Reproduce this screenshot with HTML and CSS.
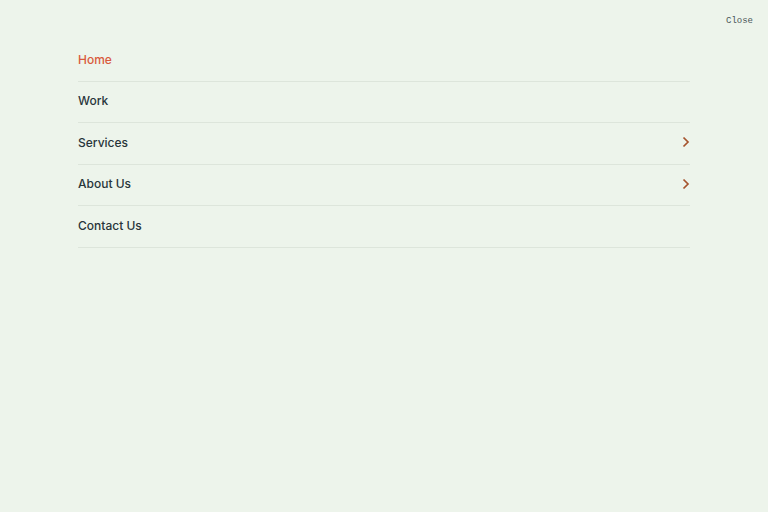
FILE: index.html
```html
<!DOCTYPE html>
<html>
<head>
<meta charset="utf-8">
<link rel="stylesheet" href="styles.css">
</head>
<body>
<div class="page">
  <header class="topbar">
    <button class="close">Close</button>
  </header>
  <nav class="menu">
    <a class="item active">Home</a>
    <a class="item">Work</a>
    <a class="item">Services<svg class="chev" width="8" height="12" viewBox="0 0 8 12"><path d="M1.5 1.5 L6 6 L1.5 10.5" fill="none" stroke="currentColor" stroke-width="1.7"/></svg></a>
    <a class="item">About Us<svg class="chev" width="8" height="12" viewBox="0 0 8 12"><path d="M1.5 1.5 L6 6 L1.5 10.5" fill="none" stroke="currentColor" stroke-width="1.7"/></svg></a>
    <a class="item">Contact Us</a>
  </nav>
</div>
</body>
</html>
```
FILE: styles.css
```css
html, body {
  margin: 0;
  padding: 0;
  background: #edf4eb;
}
.page {
  width: 768px;
  height: 512px;
  position: relative;
  font-family: Inter, "Liberation Sans", sans-serif;
}
.topbar {
  display: flex;
  justify-content: flex-end;
  padding: 15px 15px 0 0;
  height: 26px;
  box-sizing: border-box;
}
.close {
  background: none;
  border: 0;
  padding: 0;
  font-family: "Liberation Mono", "DejaVu Sans Mono", monospace;
  font-size: 9px;
  color: #4a5658;
  line-height: 12px;
}
.menu {
  display: flex;
  flex-direction: column;
  margin: 14px 78px 0 78px;
}
.item {
  display: flex;
  align-items: center;
  justify-content: space-between;
  height: 41.5px;
  padding-bottom: 2px;
  border-bottom: 1px solid #dde5db;
  font-size: 12px;
  font-weight: 500;
  color: #28353a;
  box-sizing: border-box;
}
.item.active {
  color: #d95a3c;
}
.chev {
  color: #a5532d;
  margin-right: 0;
}
```
